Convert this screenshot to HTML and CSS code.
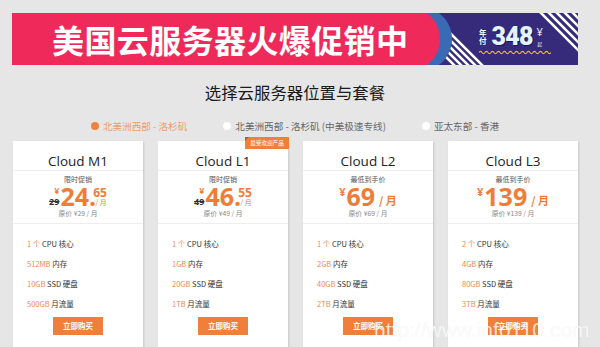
FILE: index.html
```html
<!DOCTYPE html>
<html lang="zh-CN">
<head>
<meta charset="utf-8">
<title>选择云服务器位置与套餐</title>
<link rel="stylesheet" href="styles.css">
</head>
<body>
<div class="page">
  <div class="banner">
    <svg class="banner-bg" width="566" height="52" viewBox="0 0 566 52">
      <g stroke="#fff" stroke-width="2.6">
        <line x1="411" y1="-7" x2="477" y2="59"/>
        <line x1="404" y1="-7" x2="470" y2="59"/>
        <line x1="397" y1="-7" x2="463" y2="59"/>
        <line x1="390" y1="-7" x2="456" y2="59"/>
        <line x1="383" y1="-7" x2="449" y2="59"/>
        <line x1="527" y1="-2" x2="585" y2="56"/>
        <line x1="535" y1="-2" x2="593" y2="56"/>
        <line x1="543" y1="-2" x2="601" y2="56"/>
        <line x1="551" y1="-2" x2="609" y2="56"/>
        <line x1="559" y1="-2" x2="617" y2="56"/>
      </g>
      <path d="M0 0 H426.7 A32 32 0 0 1 426.7 52 H0 Z" fill="#3b6ab5"/>
      <path d="M0 0 H414.7 A32 32 0 0 1 414.7 52 H0 Z" fill="#ef2a5b"/>
    </svg>
    <div class="banner-title">美国云服务器火爆促销中</div>
    <div class="banner-price">
      <div class="bp-row">
        <div class="bp-nian">年<br>付</div>
        <div class="bp-num">348</div>
        <div class="bp-yen"><span>¥</span><span class="bp-qi">起</span></div>
      </div>
      <svg class="bp-wave" width="72" height="5" viewBox="0 0 72 5">
        <path d="M0 2.5 q1.5 -2.2 3 0 t3 0 t3 0 t3 0 t3 0 t3 0 t3 0 t3 0 t3 0 t3 0 t3 0 t3 0 t3 0 t3 0 t3 0 t3 0 t3 0 t3 0 t3 0 t3 0 t3 0 t3 0 t3 0 t3 0" fill="none" stroke="#e9b82c" stroke-width="1.2"/>
      </svg>
    </div>
  </div>

  <h1 class="heading">选择云服务器位置与套餐</h1>

  <div class="locs">
    <div class="loc on"><span class="ldot"></span>北美洲西部 - 洛杉矶</div>
    <div class="loc"><span class="ldot"></span>北美洲西部 - 洛杉矶 (中美极速专线)</div>
    <div class="loc"><span class="ldot"></span>亚太东部 - 香港</div>
  </div>

  <div class="cards">
    <div class="card">
      <div class="card-title">Cloud M1</div>
      <div class="card-price">
        <div class="plabel">限时促销</div>
        <div class="price">
          <span class="pre"><span class="yen">¥</span><s class="old">29</s></span>
          <span class="big">24</span><span class="big">.</span>
          <span class="post"><span class="cents">65</span><span class="per">/ 月</span></span>
        </div>
        <div class="orig">原价 ¥29 / 月</div>
      </div>
      <div class="feats">
        <div><span class="hl">1 个</span> CPU 核心</div>
        <div><span class="hl">512MB</span> 内存</div>
        <div><span class="hl">10GB</span> SSD 硬盘</div>
        <div><span class="hl">500GB</span> 月流量</div>
      </div>
      <div class="buy">立即购买</div>
    </div>

    <div class="card">
      <div class="badge">最受欢迎产品</div>
      <div class="card-title">Cloud L1</div>
      <div class="card-price">
        <div class="plabel">限时促销</div>
        <div class="price">
          <span class="pre"><span class="yen">¥</span><s class="old">49</s></span>
          <span class="big">46</span><span class="big">.</span>
          <span class="post"><span class="cents">55</span><span class="per">/ 月</span></span>
        </div>
        <div class="orig">原价 ¥49 / 月</div>
      </div>
      <div class="feats">
        <div><span class="hl">1 个</span> CPU 核心</div>
        <div><span class="hl">1GB</span> 内存</div>
        <div><span class="hl">20GB</span> SSD 硬盘</div>
        <div><span class="hl">1TB</span> 月流量</div>
      </div>
      <div class="buy">立即购买</div>
    </div>

    <div class="card">
      <div class="card-title">Cloud L2</div>
      <div class="card-price">
        <div class="plabel">最低到手价</div>
        <div class="price">
          <span class="yen solo">¥</span><span class="big">69</span><span class="unit">/ 月</span>
        </div>
        <div class="orig">原价 ¥69 / 月</div>
      </div>
      <div class="feats">
        <div><span class="hl">1 个</span> CPU 核心</div>
        <div><span class="hl">2GB</span> 内存</div>
        <div><span class="hl">40GB</span> SSD 硬盘</div>
        <div><span class="hl">2TB</span> 月流量</div>
      </div>
      <div class="buy">立即购买</div>
    </div>

    <div class="card">
      <div class="card-title">Cloud L3</div>
      <div class="card-price">
        <div class="plabel">最低到手价</div>
        <div class="price">
          <span class="yen solo">¥</span><span class="big">139</span><span class="unit">/ 月</span>
        </div>
        <div class="orig">原价 ¥139 / 月</div>
      </div>
      <div class="feats">
        <div><span class="hl">2 个</span> CPU 核心</div>
        <div><span class="hl">4GB</span> 内存</div>
        <div><span class="hl">80GB</span> SSD 硬盘</div>
        <div><span class="hl">3TB</span> 月流量</div>
      </div>
      <div class="buy">立即购买</div>
    </div>
  </div>
</div>
<div class="watermark">http://www.info110.com</div>
</body>
</html>
```

FILE: styles.css
```css
* { box-sizing: border-box; margin: 0; padding: 0; }
html, body { width: 600px; height: 347px; overflow: hidden; }
body {
  background: #e6e6e6;
  font-family: "Open Sans", "Noto Sans CJK SC", sans-serif;
  color: #333;
  position: relative;
}
.page { width: 566px; margin-left: 12px; padding-top: 13px; }

/* banner */
.banner {
  position: relative;
  height: 52px;
  background: #362a7b;
  display: flex;
  align-items: center;
  overflow: hidden;
}
.banner-bg { position: absolute; left: 0; top: 0; }
.banner-title {
  position: relative;
  padding-left: 40px;
  font-family: "Noto Sans CJK SC", sans-serif;
  font-weight: 700;
  font-size: 32px;
  letter-spacing: 0.4px;
  line-height: 52px;
  color: #fff;
}
.banner-price {
  position: relative;
  margin-left: auto;
  margin-right: 27px;
  display: flex;
  flex-direction: column;
  align-items: flex-start;
  padding-top: 2px;
}
.bp-row { display: flex; align-items: center; }
.bp-nian {
  font-family: "Noto Sans CJK SC", sans-serif;
  font-weight: 700;
  font-size: 7.5px;
  line-height: 8px;
  color: #fff;
  margin-right: 5px;
}
.bp-num {
  font-family: Roboto, "Open Sans", sans-serif;
  font-weight: 900;
  font-size: 25px;
  line-height: 22px;
  color: #e2f5ff;
  text-shadow: 1px 1px 0 #1d1455;
  letter-spacing: -0.8px;
}
.bp-yen {
  display: flex;
  flex-direction: column;
  align-items: center;
  margin-left: 4px;
  color: #fff;
  font-size: 11px;
  line-height: 11px;
  align-self: flex-start;
}
.bp-qi { font-family: "Noto Sans CJK SC", sans-serif; font-size: 4.5px; line-height: 6px; margin-top: 4px; }
.bp-wave { display: block; margin-top: 2px; }

/* heading & locations */
.heading {
  margin-top: 16px;
  text-align: center;
  font-family: "Noto Sans CJK SC", sans-serif;
  font-weight: 400;
  font-size: 16.4px;
  line-height: 22px;
  color: #1a1a1a;
}
.locs {
  margin-top: 16px;
  display: flex;
  justify-content: center;
  gap: 36px;
  font-family: "Noto Sans CJK SC", sans-serif;
  font-size: 9.6px;
  line-height: 14px;
  color: #666;
}
.loc { display: flex; align-items: center; gap: 4px; }
.ldot { width: 8px; height: 8px; border-radius: 50%; background: #fff; }
.loc.on { color: #f19c6a; }
.loc.on .ldot { background: #f0823e; }

/* cards */
.cards {
  margin-top: 8px;
  margin-left: 1px;
  display: grid;
  grid-template-columns: repeat(4, 130px);
  gap: 15px;
}
.card {
  position: relative;
  background: #fff;
  height: 215px;
  box-shadow: 1px 1px 2px rgba(0, 0, 0, 0.14);
}
.card-title {
  height: 30px;
  padding-top: 11px;
  text-align: center;
  font-size: 13.5px;
  line-height: 18px;
  color: #222;
  border-bottom: 1px solid #eee;
}
.card-price {
  height: 53px;
  padding-top: 4px;
  text-align: center;
  border-bottom: 1px solid #eee;
  font-family: "Noto Sans CJK SC", sans-serif;
}
.plabel { font-size: 7px; line-height: 9px; color: #555; }
.orig { font-size: 6.8px; line-height: 10px; color: #888; }
.price {
  display: flex;
  justify-content: center;
  align-items: stretch;
  height: 24px;
  color: #ef7d36;
  font-family: "Open Sans", sans-serif;
  font-weight: 700;
}
.big { font-size: 25px; line-height: 24px; align-self: flex-end; }
.pre {
  display: flex;
  flex-direction: column;
  justify-content: space-between;
  align-items: flex-end;
  padding: 2px 0 2px;
  margin-right: 1px;
}
.yen { font-size: 9px; line-height: 9px; }
.old { font-size: 9px; line-height: 9px; color: #333; text-decoration: line-through; }
.post {
  display: flex;
  flex-direction: column;
  justify-content: space-between;
  align-items: flex-end;
  padding: 3px 0 2px;
  margin-left: -3px;
}
.cents { font-size: 12px; line-height: 11px; }
.per { font-family: "Noto Sans CJK SC", sans-serif; font-size: 7px; line-height: 8px; font-weight: 400; }
.solo { font-size: 11px; line-height: 12px; align-self: flex-start; margin-top: 2px; margin-right: 1px; }
.unit {
  font-family: "Noto Sans CJK SC", sans-serif;
  font-size: 11px;
  line-height: 14px;
  align-self: flex-end;
  margin-left: 4px;
  padding-bottom: 1px;
}
.feats {
  padding: 10px 0 0 14px;
  font-family: "Noto Sans CJK SC", sans-serif;
  font-size: 7.5px;
  line-height: 20px;
  color: #333;
}
.hl { color: #ef8a4c; }
.buy {
  width: 50px;
  height: 18px;
  margin: 3px auto 0;
  background: #ef7f3a;
  color: #fff;
  text-align: center;
  font-family: "Noto Sans CJK SC", sans-serif;
  font-weight: 700;
  font-size: 7.5px;
  line-height: 18px;
}
.badge {
  position: absolute;
  top: -4px;
  right: -1px;
  width: 44px;
  height: 12px;
  background: #ef7f3a;
  color: #fff;
  text-align: center;
  font-family: "Noto Sans CJK SC", sans-serif;
  font-size: 5.6px;
  line-height: 12px;
}
.badge::before {
  content: "";
  position: absolute;
  left: 0;
  top: 0;
  border-top: 4px solid #b85a22;
  border-right: 4px solid transparent;
}
.watermark {
  position: absolute;
  left: 374px;
  top: 318px;
  font-family: "Liberation Sans", sans-serif;
  font-size: 21px;
  line-height: 24px;
  color: rgba(255, 255, 255, 0.8);
  text-shadow: 0 0 1px rgba(0, 0, 0, 0.07);
  white-space: nowrap;
}
```
